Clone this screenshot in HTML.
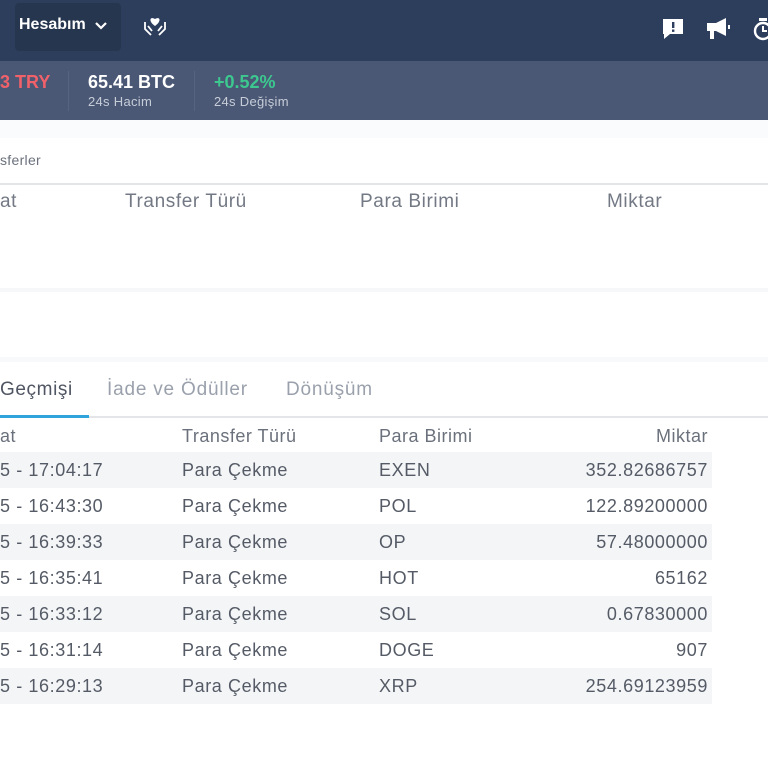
<!DOCTYPE html>
<html><head><meta charset="utf-8"><style>
*{margin:0;padding:0;box-sizing:border-box}
body{width:768px;height:768px;overflow:hidden;background:#fff;font-family:"Liberation Sans",Arial,sans-serif;position:relative}
.abs{position:absolute;white-space:nowrap}
.nav{position:absolute;left:0;top:0;width:768px;height:61px;background:#2d3e5d}
.stats{position:absolute;left:0;top:61px;width:768px;height:59px;background:#4a5875}
.row{position:absolute;left:0;width:712px;height:36px;font-size:18px;color:#555b66;letter-spacing:0.6px}
.row span{position:absolute;top:8px}
.g{background:#f4f5f7}
.h{color:#6b717c;font-size:18px;letter-spacing:0.5px}
.h2{color:#737984;font-size:19px;letter-spacing:0.6px}
</style></head><body>
<div class="nav">
 <div class="abs" style="left:15px;top:3px;width:106px;height:48px;background:#27364f;border-radius:4px"></div>
 <div class="abs" style="left:19px;top:16px;color:#fff;font-weight:bold;font-size:16px">Hesabım</div>
 <svg class="abs" style="left:94px;top:20px" width="14" height="12" viewBox="0 0 14 12"><path d="M2 3l5 5 5-5" stroke="#fff" stroke-width="2.2" fill="none"/></svg>
 <svg class="abs" style="left:142px;top:14px" width="26" height="24" viewBox="0 0 26 24"><path d="M13 12 C6 7 8 2 13 5 C18 2 20 7 13 12Z" fill="#fff"/><path d="M3 8 L3 15 L9 21 M23 8 L23 15 L17 21 M6 12 L10 17 M20 12 L16 17" stroke="#fff" stroke-width="1.8" fill="none"/></svg>
 <svg class="abs" style="left:661px;top:17px" width="24" height="24" viewBox="0 0 24 24"><path d="M2 2h20v15H9l-6 5v-5H2z" fill="#fff"/><rect x="11" y="5" width="2.4" height="6" fill="#2d3e5d"/><rect x="11" y="12.5" width="2.4" height="2.4" fill="#2d3e5d"/></svg>
 <svg class="abs" style="left:705px;top:17px" width="30" height="26" viewBox="0 0 30 26"><rect x="2" y="6" width="9" height="8" fill="#fff"/><path d="M11 6 L21 1 V19 L11 14Z" fill="#fff"/><rect x="5" y="14" width="4" height="8" fill="#fff"/><rect x="23" y="8" width="2" height="4" fill="#fff"/></svg>
 <svg class="abs" style="left:752px;top:16px" width="20" height="26" viewBox="0 0 20 26"><circle cx="11" cy="15" r="8" stroke="#fff" stroke-width="2.4" fill="none"/><rect x="7" y="2" width="8" height="3" fill="#fff"/><path d="M11 10v5h4" stroke="#fff" stroke-width="2" fill="none"/></svg>
</div>
<div class="stats">
 <div class="abs" style="left:0;top:11px;color:#f0616a;font-weight:bold;font-size:18px">3 TRY</div>
 <div class="abs" style="left:68px;top:10px;width:1px;height:40px;background:#56647f"></div>
 <div class="abs" style="left:88px;top:11px;color:#fff;font-weight:bold;font-size:18px">65.41 BTC</div>
 <div class="abs" style="left:88px;top:33px;color:#c7cdd8;font-size:13px;letter-spacing:0.3px">24s Hacim</div>
 <div class="abs" style="left:194px;top:10px;width:1px;height:40px;background:#56647f"></div>
 <div class="abs" style="left:214px;top:11px;color:#3cc88f;font-weight:bold;font-size:18px">+0.52%</div>
 <div class="abs" style="left:214px;top:33px;color:#c7cdd8;font-size:13px;letter-spacing:0.3px">24s Değişim</div>
</div>
<div class="abs" style="left:0;top:120px;width:768px;height:18px;background:#fafbfc"></div>
<div class="abs" style="left:0;top:152px;color:#6b717c;font-size:14px;letter-spacing:0.3px">sferler</div>
<div class="abs" style="left:0;top:183px;width:768px;height:2px;background:#e3e5e8"></div>
<div class="abs h2" style="left:0;top:191px">at</div>
<div class="abs h2" style="left:125px;top:191px">Transfer Türü</div>
<div class="abs h2" style="left:360px;top:191px">Para Birimi</div>
<div class="abs h2" style="left:607px;top:191px">Miktar</div>
<div class="abs" style="left:0;top:288px;width:768px;height:4px;background:#f6f7f8"></div>
<div class="abs" style="left:0;top:357px;width:768px;height:5px;background:#f8f9fa"></div>
<div class="abs" style="left:0;top:379px;color:#4f5562;font-size:19px;letter-spacing:0.6px">Geçmişi</div>
<div class="abs" style="left:107px;top:379px;color:#9aa1ac;font-size:19px;letter-spacing:0.8px">İade ve Ödüller</div>
<div class="abs" style="left:286px;top:379px;color:#9aa1ac;font-size:19px;letter-spacing:0.8px">Dönüşüm</div>
<div class="abs" style="left:0;top:416px;width:768px;height:2px;background:#e3e5e8"></div>
<div class="abs" style="left:0;top:415px;width:89px;height:3px;background:#2fa3db"></div>
<div class="abs h" style="left:0;top:426px">at</div>
<div class="abs h" style="left:182px;top:426px">Transfer Türü</div>
<div class="abs h" style="left:379px;top:426px">Para Birimi</div>
<div class="abs h" style="right:60px;top:426px">Miktar</div>
<div class="row g" style="top:452px"><span style="left:0">5 - 17:04:17</span><span style="left:182px">Para Çekme</span><span style="left:379px">EXEN</span><span style="right:4px">352.82686757</span></div>
<div class="row" style="top:488px"><span style="left:0">5 - 16:43:30</span><span style="left:182px">Para Çekme</span><span style="left:379px">POL</span><span style="right:4px">122.89200000</span></div>
<div class="row g" style="top:524px"><span style="left:0">5 - 16:39:33</span><span style="left:182px">Para Çekme</span><span style="left:379px">OP</span><span style="right:4px">57.48000000</span></div>
<div class="row" style="top:560px"><span style="left:0">5 - 16:35:41</span><span style="left:182px">Para Çekme</span><span style="left:379px">HOT</span><span style="right:4px">65162</span></div>
<div class="row g" style="top:596px"><span style="left:0">5 - 16:33:12</span><span style="left:182px">Para Çekme</span><span style="left:379px">SOL</span><span style="right:4px">0.67830000</span></div>
<div class="row" style="top:632px"><span style="left:0">5 - 16:31:14</span><span style="left:182px">Para Çekme</span><span style="left:379px">DOGE</span><span style="right:4px">907</span></div>
<div class="row g" style="top:668px"><span style="left:0">5 - 16:29:13</span><span style="left:182px">Para Çekme</span><span style="left:379px">XRP</span><span style="right:4px">254.69123959</span></div>
</body></html>
